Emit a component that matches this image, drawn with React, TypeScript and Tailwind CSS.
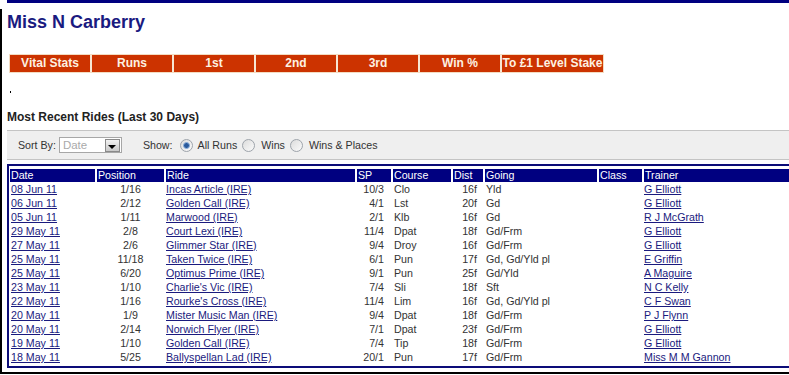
const rides = [
  ["08 Jun 11", "1/16", "Incas Article (IRE)", "10/3", "Clo", "16f", "Yld", "", "G Elliott"],
  ["06 Jun 11", "2/12", "Golden Call (IRE)", "4/1", "Lst", "20f", "Gd", "", "G Elliott"],
  ["05 Jun 11", "1/11", "Marwood (IRE)", "2/1", "Klb", "16f", "Gd", "", "R J McGrath"],
  ["29 May 11", "2/8", "Court Lexi (IRE)", "11/4", "Dpat", "18f", "Gd/Frm", "", "G Elliott"],
  ["27 May 11", "2/6", "Glimmer Star (IRE)", "9/4", "Droy", "16f", "Gd/Frm", "", "G Elliott"],
  ["25 May 11", "11/18", "Taken Twice (IRE)", "6/1", "Pun", "17f", "Gd, Gd/Yld pl", "", "E Griffin"],
  ["25 May 11", "6/20", "Optimus Prime (IRE)", "9/1", "Pun", "25f", "Gd/Yld", "", "A Maguire"],
  ["23 May 11", "1/10", "Charlie's Vic (IRE)", "7/4", "Sli", "18f", "Sft", "", "N C Kelly"],
  ["22 May 11", "1/16", "Rourke's Cross (IRE)", "11/4", "Lim", "16f", "Gd, Gd/Yld pl", "", "C F Swan"],
  ["20 May 11", "1/9", "Mister Music Man (IRE)", "9/4", "Dpat", "18f", "Gd/Frm", "", "P J Flynn"],
  ["20 May 11", "2/14", "Norwich Flyer (IRE)", "7/1", "Dpat", "23f", "Gd/Frm", "", "G Elliott"],
  ["19 May 11", "1/10", "Golden Call (IRE)", "7/4", "Tip", "18f", "Gd/Frm", "", "G Elliott"],
  ["18 May 11", "5/25", "Ballyspellan Lad (IRE)", "20/1", "Pun", "17f", "Gd/Frm", "", "Miss M M Gannon"],
]

const headers = ["Date", "Position", "Ride", "SP", "Course", "Dist", "Going", "Class", "Trainer"]
const stats = ["Vital Stats", "Runs", "1st", "2nd", "3rd", "Win %"]

function Radio({ checked }: { checked?: boolean }) {
  return (
    <span className="flex h-[13px] w-[13px] items-center justify-center rounded-full border border-[#9ea4ab] bg-gradient-to-br from-[#dcdcdc] to-[#fbfbfb]">
      {checked && <span className="h-[7px] w-[7px] rounded-full border border-[#8fb2dc] bg-[#2a5a9c]" />}
    </span>
  )
}

export default function App() {
  return (
    <div className="h-[375px] w-[789px] overflow-hidden bg-white font-['Liberation_Sans',Arial,sans-serif]">
      <div className="ml-[7px] h-[3px] bg-[#000080]" />
      <div className="mt-[6px] flex h-[365px] flex-col border-b-2 border-l-2 border-black pl-[5px]">
        <h1 className="mt-[2px] h-[22px] text-[18px] font-bold leading-[22px] text-[#1a1a80]">Miss N Carberry</h1>

        {/* stats bar */}
        <div className="ml-[2px] mt-[21px] flex w-fit gap-[2px] border border-[#f3dcc2] bg-[#f7e6d2]">
          {stats.map((s) => (
            <div key={s} className="h-[17px] w-[80px] bg-[#cc3300] text-center text-[12px] font-bold leading-[17px] text-[#fdf1e2]">
              {s}
            </div>
          ))}
          <div className="h-[17px] w-[101px] bg-[#cc3300] text-center text-[12px] font-bold leading-[17px] text-[#fdf1e2] whitespace-nowrap">
            To £1 Level Stake
          </div>
        </div>

        <div className="ml-[3px] mt-[18px] h-[2px] w-[1px] bg-black" />

        <h2 className="mt-[17px] h-[14px] text-[12px] font-bold leading-[14px] text-[#222]">Most Recent Rides (Last 30 Days)</h2>

        {/* filter bar */}
        <div className="mt-[6px] flex h-[30px] items-center border-y border-[#c4c4c4] bg-[#efefef] pl-[11px] text-[10.67px] text-[#333]">
          <span>Sort By:</span>
          <div className="ml-[3px] flex h-[16px] w-[63px] items-center border border-[#a7a7a7] bg-white">
            <span className="flex-1 pl-[3px] text-[11.5px] leading-[14px] text-[#aaa]">Date</span>
            <span className="mr-[1px] flex h-[13px] w-[15px] items-end justify-center border border-[#8a8a8a] bg-gradient-to-b from-[#f2f2f2] to-[#c9c9c9] pb-[2px]">
              <span className="h-0 w-0 border-x-[4px] border-t-[4px] border-x-transparent border-t-black" />
            </span>
          </div>
          <span className="ml-[21px]">Show:</span>
          <span className="ml-[7px]"><Radio checked /></span>
          <span className="ml-[5px]">All Runs</span>
          <span className="ml-[5px]"><Radio /></span>
          <span className="ml-[6px]">Wins</span>
          <span className="ml-[5px]"><Radio /></span>
          <span className="ml-[6px]">Wins &amp; Places</span>
        </div>

        {/* rides table */}
        <div className="mt-[4px] w-[840px] border-2 border-[#0c0c78] pb-[2px] pl-[1px] pt-[3px] text-[10.67px]">
          <div className="grid grid-cols-[85px_67px_189px_34px_58px_30px_112px_43px_180px] gap-x-[2px] gap-y-[1px]">
            {headers.map((h) => (
              <div key={h} className="h-[13px] bg-[#000080] pl-[1px] leading-[13px] text-white">
                {h}
              </div>
            ))}
            {rides.map((r, i) => (
              <div key={i} className="contents leading-[13px] text-[#333]">
                <a className="h-[13px] pl-[1px] text-[#1a1a7e] underline">{r[0]}</a>
                <div className="text-center">{r[1]}</div>
                <a className="text-[#1a1a7e] underline">{r[2]}</a>
                <div className="pr-[7px] text-right">{r[3]}</div>
                <div className="pl-[1px]">{r[4]}</div>
                <div className="pr-[6px] text-right">{r[5]}</div>
                <div className="pl-[1px]">{r[6]}</div>
                <div>{r[7]}</div>
                <a className="text-[#1a1a7e] underline">{r[8]}</a>
              </div>
            ))}
          </div>
        </div>
      </div>
    </div>
  )
}
